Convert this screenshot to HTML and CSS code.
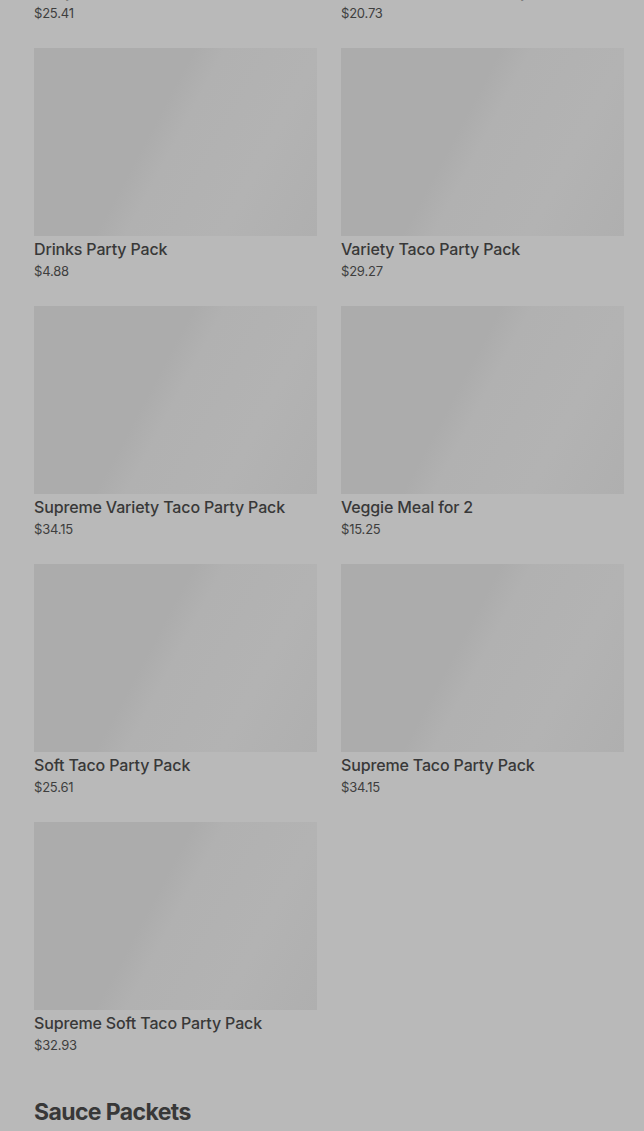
FILE: index.html
```html
<!DOCTYPE html>
<html lang="en">
<head>
  <meta charset="UTF-8">
  <meta name="viewport" content="width=device-width, initial-scale=1">
  <title>Party Packs</title>
  <link rel="stylesheet" href="styles.css">
</head>
<body>

<div class="menu">
  <div class="grade">
    <div class="item">
      <div class="foto"></div>
      <div class="nome">Party Pack</div>
      <div class="preco">$25.41</div>
    </div>
    <div class="item">
      <div class="foto"></div>
      <div class="nome">Nachos BellGrande Party Pack</div>
      <div class="preco">$20.73</div>
    </div>
    <div class="item">
      <div class="foto"></div>
      <div class="nome">Drinks Party Pack</div>
      <div class="preco">$4.88</div>
    </div>
    <div class="item">
      <div class="foto"></div>
      <div class="nome">Variety Taco Party Pack</div>
      <div class="preco">$29.27</div>
    </div>
    <div class="item">
      <div class="foto"></div>
      <div class="nome">Supreme Variety Taco Party Pack</div>
      <div class="preco">$34.15</div>
    </div>
    <div class="item">
      <div class="foto"></div>
      <div class="nome">Veggie Meal for 2</div>
      <div class="preco">$15.25</div>
    </div>
    <div class="item">
      <div class="foto"></div>
      <div class="nome">Soft Taco Party Pack</div>
      <div class="preco">$25.61</div>
    </div>
    <div class="item">
      <div class="foto"></div>
      <div class="nome">Supreme Taco Party Pack</div>
      <div class="preco">$34.15</div>
    </div>
    <div class="item">
      <div class="foto"></div>
      <div class="nome">Supreme Soft Taco Party Pack</div>
      <div class="preco">$32.93</div>
    </div>
  </div>

  <h2 class="secao">Sauce Packets</h2>
</div>

</body>
</html>
```

FILE: styles.css
```css
body {
  font-family: Inter, "Noto Sans", sans-serif;
  background-color: #b9b9b9;
  margin: 0;
  overflow: hidden;
}

/* a tela já está rolada: a primeira linha fica cortada no topo */
.menu {
  margin-top: -210px;
  padding: 0 20px 0 34px;
}

.grade {
  display: grid;
  grid-template-columns: 1fr 1fr;
  column-gap: 24px;
  row-gap: 26px;
}

.foto {
  height: 188px;
  background-color: #acacac;
  background-image: linear-gradient(118deg, #acacac 0%, #acacac 42%, #b1b1b1 50%, #b3b3b3 75%, #afafaf 100%);
}

.nome {
  margin-top: 3px;
  font-size: 16px;
  line-height: 20px;
  font-weight: 500;
  letter-spacing: -0.15px;
  color: #383838;
}

.preco {
  margin-top: 3px;
  font-size: 13px;
  line-height: 18px;
  letter-spacing: -0.2px;
  color: #3e3e3e;
}

.secao {
  margin: 43px 0 0;
  font-size: 23px;
  line-height: 30px;
  font-weight: 700;
  color: #383838;
  letter-spacing: -0.6px;
}
```
